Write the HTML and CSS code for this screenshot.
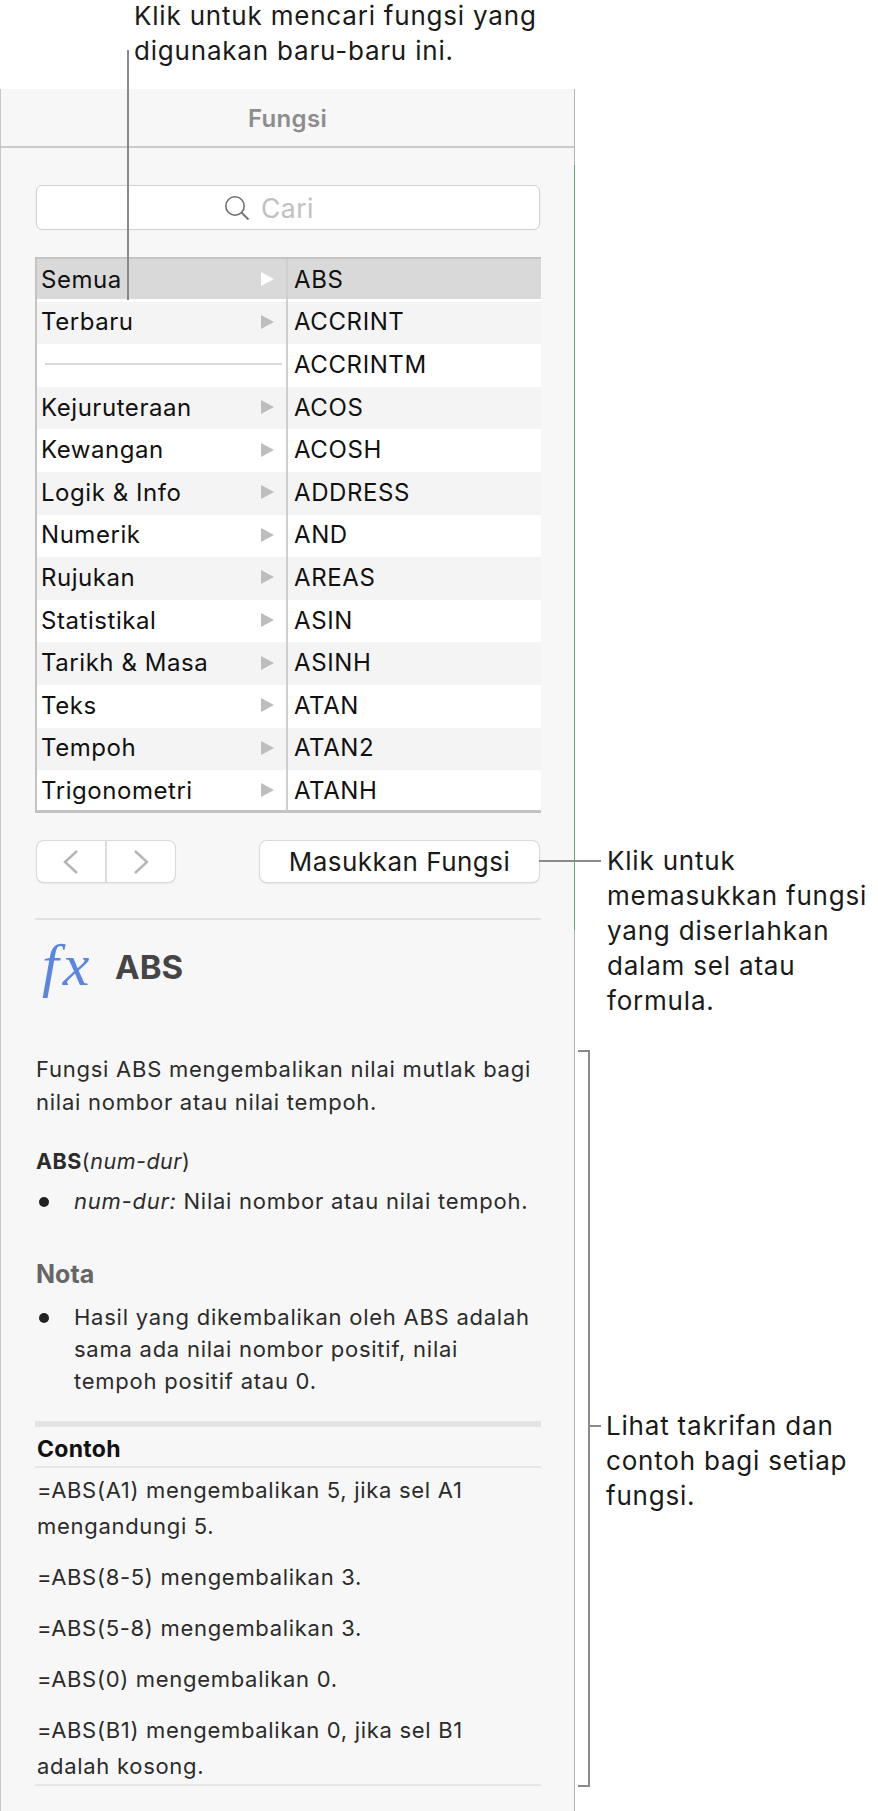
FILE: index.html
```html
<!DOCTYPE html>
<html lang="ms">
<head>
<meta charset="utf-8">
<title>Fungsi</title>
<link rel="stylesheet" href="styles.css">
</head>
<body>
<div class="page">
  <p class="note note-top">Klik untuk mencari fungsi yang<br>digunakan baru-baru ini.</p>
  <aside class="panel">
    <header class="panel-head">Fungsi</header>
    <div class="panel-body">
      <div class="search">
        <svg class="search-icon" viewBox="0 0 26 26" width="26" height="26"><circle cx="11" cy="11" r="9.2" fill="none" stroke="#6e6e6e" stroke-width="1.6"/><path d="M17.6 17.6 24.5 24.5" stroke="#6e6e6e" stroke-width="1.8" fill="none"/></svg>
        <span>Cari</span>
      </div>
      <div class="browser">
        <ul class="col col-cat">
          <li class="sel">Semua<i class="tri"></i></li>
          <li>Terbaru<i class="tri"></i></li>
          <li class="sep"><hr></li>
          <li>Kejuruteraan<i class="tri"></i></li>
          <li>Kewangan<i class="tri"></i></li>
          <li>Logik &amp; Info<i class="tri"></i></li>
          <li>Numerik<i class="tri"></i></li>
          <li>Rujukan<i class="tri"></i></li>
          <li>Statistikal<i class="tri"></i></li>
          <li>Tarikh &amp; Masa<i class="tri"></i></li>
          <li>Teks<i class="tri"></i></li>
          <li>Tempoh<i class="tri"></i></li>
          <li>Trigonometri<i class="tri"></i></li>
        </ul>
        <ul class="col col-fn">
          <li class="sel">ABS</li>
          <li>ACCRINT</li>
          <li>ACCRINTM</li>
          <li>ACOS</li>
          <li>ACOSH</li>
          <li>ADDRESS</li>
          <li>AND</li>
          <li>AREAS</li>
          <li>ASIN</li>
          <li>ASINH</li>
          <li>ATAN</li>
          <li>ATAN2</li>
          <li>ATANH</li>
        </ul>
      </div>
      <div class="actions">
        <div class="nav">
          <button class="nav-btn" aria-label="Kembali"><svg viewBox="0 0 18 26" width="18" height="26"><path d="M15 2 3 13l12 11" fill="none" stroke="#b5b5b5" stroke-width="2.4"/></svg></button>
          <button class="nav-btn" aria-label="Seterusnya"><svg viewBox="0 0 18 26" width="18" height="26"><path d="M3 2l12 11L3 24" fill="none" stroke="#b5b5b5" stroke-width="2.4"/></svg></button>
        </div>
        <button class="insert">Masukkan Fungsi</button>
      </div>
      <div class="fn-title">
        <span class="fx">fx</span>
        <h2>ABS</h2>
      </div>
      <p class="desc">Fungsi ABS mengembalikan nilai mutlak bagi nilai nombor atau nilai tempoh.</p>
      <p class="syntax"><b>ABS</b>(<em>num-dur</em>)</p>
      <ul class="bullets b-arg"><li><em>num-dur:</em> Nilai nombor atau nilai tempoh.</li></ul>
      <h3 class="nota">Nota</h3>
      <ul class="bullets b-nota"><li>Hasil yang dikembalikan oleh ABS adalah sama ada nilai nombor positif, nilai tempoh positif atau 0.</li></ul>
      <section class="examples">
        <h4>Contoh</h4>
        <p>=ABS(A1) mengembalikan 5, jika sel A1 mengandungi 5.</p>
        <p>=ABS(8-5) mengembalikan 3.</p>
        <p>=ABS(5-8) mengembalikan 3.</p>
        <p>=ABS(0) mengembalikan 0.</p>
        <p>=ABS(B1) mengembalikan 0, jika sel B1 adalah kosong.</p>
      </section>
    </div>
  </aside>
  <i class="edge-green"></i>
  <i class="lead lead-top"></i>
  <i class="lead lead-insert"></i>
  <i class="bracket"></i>
  <i class="lead lead-bracket"></i>
  <p class="note note-insert">Klik untuk<br>memasukkan fungsi<br>yang diserlahkan<br>dalam sel atau<br>formula.</p>
  <p class="note note-bracket">Lihat takrifan dan<br>contoh bagi setiap<br>fungsi.</p>
</div>
</body>
</html>
```
FILE: styles.css
```css
* { box-sizing: border-box; }
html, body { margin: 0; background: #fff; }
body { font-family: Inter, "Liberation Sans", sans-serif; color: #111; }
.page { position: relative; width: 878px; height: 1811px; overflow: hidden; padding-top: 89px; }
ul { list-style: none; margin: 0; padding: 0; }
p, h2, h3, h4 { margin: 0; }

.note { position: absolute; margin: 0; font-size: 26px; letter-spacing: .8px; line-height: 35px; color: #1a1a1a; white-space: nowrap; }
.note-top { left: 134px; top: -2px; }
.note-insert { left: 607px; top: 843px; }
.note-bracket { left: 606px; top: 1408px; }

.lead { position: absolute; background: #8a8a8a; }
.lead-top { left: 127px; top: 50px; width: 2px; height: 250px; }
.lead-insert { left: 539px; top: 860px; width: 62px; height: 2px; }
.lead-bracket { left: 589px; top: 1425px; width: 12px; height: 2px; }
.bracket { position: absolute; left: 578px; top: 1050px; width: 12px; height: 737px; border: 2px solid #8a8a8a; border-left: 0; }
.edge-green { position: absolute; left: 574px; top: 165px; width: 1px; height: 765px; background: #62a86f; }

.panel { width: 575px; height: 1722px; background: #f7f7f7; border-left: 1px solid #c6c6c6; border-right: 1px solid #b4b4b4; }
.panel-head { height: 59px; border-bottom: 2px solid #c9cccd; text-align: center; font-size: 24px; letter-spacing: .3px; line-height: 60px; font-weight: 600; color: #8d8d8d; }
.panel-body { padding: 37px 34px 0 35px; }

.search { display: flex; align-items: center; justify-content: center; gap: 11px; height: 45px; background: #fff; border: 1px solid #cfcfcf; border-radius: 6px; font-size: 26.5px; letter-spacing: .5px; color: #c0c0c0; padding-right: 38px; }
.search-icon { flex: none; }

.browser { display: flex; margin-top: 27px; margin-left: -1px; margin-right: -1px; height: 556px; background: #fff; border: solid #c3c3c3; border-width: 2px 0 3px 2px; }
.col { display: flex; flex-direction: column; }
.col-cat { width: 251px; border-right: 2px solid #cfcfcf; }
.col-fn { flex: 1; }
.col li { height: 42.6px; flex: none; display: flex; align-items: center; justify-content: space-between; font-size: 24px; letter-spacing: .55px; color: #111; padding: 0 12px 2px 4px; }
.col li:nth-child(even) { background: #f4f4f4; }
.col-fn li { padding-left: 6px; font-size: 24px; letter-spacing: .6px; }
.col li.sel { background: #d9d9d9; height: 40px; margin-bottom: 2.6px; padding-bottom: 0; }
.col li.sep { padding-left: 8px; padding-right: 4px; }
.sep hr { width: 100%; margin: 0; border: 0; border-top: 2px solid #d9d9d9; }
.tri { flex: none; width: 0; height: 0; border-left: 13px solid #bdbdbd; border-top: 7px solid transparent; border-bottom: 7px solid transparent; }
.sel .tri { border-left-color: #fff; }

.actions { display: flex; justify-content: space-between; align-items: center; margin-top: 28px; padding: 0 1px 0 1px; }
.nav { display: flex; width: 138px; height: 41px; background: #fff; border-radius: 7px; box-shadow: 0 0 0 1px #d9d9d9, 0 1px 2px rgba(0,0,0,.2); }
.nav-btn { flex: 1; background: none; border: 0; padding: 0; display: flex; align-items: center; justify-content: center; }
.nav-btn + .nav-btn { border-left: 2px solid #dcdcdc; }
.insert { width: 279px; height: 41px; background: #fff; border: 0; border-radius: 7px; box-shadow: 0 0 0 1px #d9d9d9, 0 1px 2px rgba(0,0,0,.2); font: 400 26px Inter, "Liberation Sans", sans-serif; letter-spacing: .5px; color: #1a1a1a; }

.fn-title { display: flex; align-items: center; margin-top: 36px; margin-left: -1px; margin-right: -1px; padding: 0 0 0 7px; height: 97px; border-top: 2px solid #e2e2e2; }
.fx { width: 73px; margin-top: -6px; font: italic 400 60px "Liberation Serif", serif; letter-spacing: 4px; color: #5a86e0; line-height: 1; }
.fn-title h2 { font-size: 33px; line-height: 1; font-weight: 700; color: #454545; }

.desc { margin-top: 38px; font-size: 22px; letter-spacing: .75px; line-height: 33px; color: #2b2b2b; }
.syntax { margin-top: 26px; font-size: 21.5px; letter-spacing: .5px; line-height: 33px; color: #2b2b2b; }
.syntax b { font-weight: 700; }
.bullets { font-size: 22px; letter-spacing: .75px; line-height: 32px; color: #2b2b2b; }
.bullets li { position: relative; padding-left: 38px; }
.bullets li::before { content: ""; position: absolute; left: 3px; top: 12px; width: 10px; height: 10px; border-radius: 50%; background: #222; }
.b-arg { margin-top: 7px; }
.nota { margin-top: 41px; font-size: 25px; line-height: 32px; font-weight: 700; color: #666; }
.b-nota { margin-top: 11px; }

.examples { margin: 24px -1px 0; border-top: 6px solid #e3e3e3; border-bottom: 2px solid #e6e6e6; font-size: 22px; letter-spacing: .7px; color: #2b2b2b; }
.examples h4 { height: 41px; padding: 7px 2px 0; border-bottom: 2px solid #e6e6e6; font-size: 23px; letter-spacing: .3px; line-height: 30px; font-weight: 700; color: #111; }
.examples p { padding: 0 10px 0 2px; line-height: 36px; margin-top: 15px; }
.examples h4 + p { margin-top: 4px; }
```
